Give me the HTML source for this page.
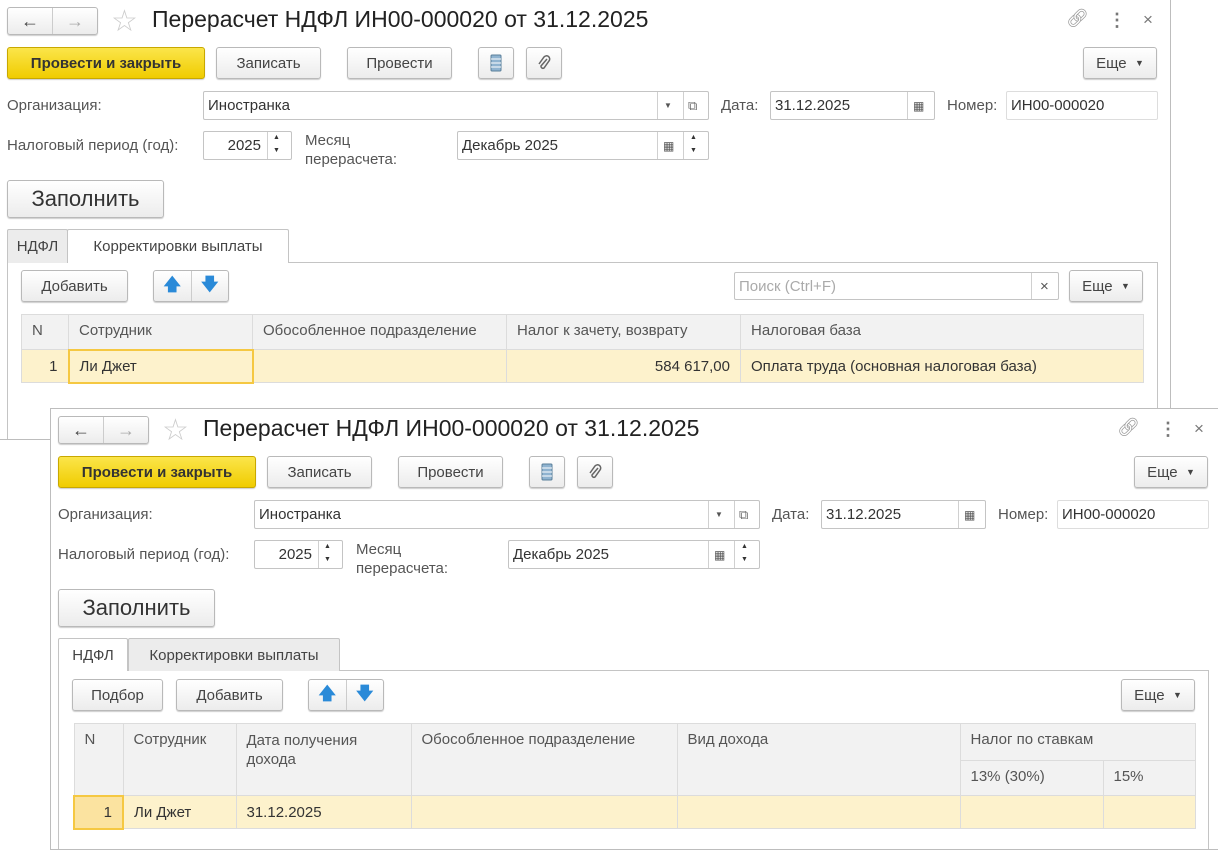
<!DOCTYPE html>
<html><head><meta charset="utf-8"><style>
*{box-sizing:border-box;margin:0;padding:0}
body{width:1218px;height:847px;background:#fff;position:relative;overflow:hidden;font-family:"Liberation Sans",Arial,sans-serif;font-size:15px;color:#444}
.win{position:absolute;background:#fff;border:1px solid #bdbdbd;overflow:hidden}
.a{position:absolute}
.btn{position:absolute;border:1px solid #b9b9b9;border-radius:3px;background:linear-gradient(#fff,#ececec);box-shadow:0 1px 1px rgba(0,0,0,.2);color:#444;font-size:15px;display:flex;align-items:center;justify-content:center;white-space:nowrap}
.yel{background:linear-gradient(#fbe54a,#f0cc00);border-color:#c8a800;color:#333;font-weight:bold}
.inp{position:absolute;border:1px solid #c4c4c4;background:#fff;border-radius:2px;font-size:15px;color:#333;padding-left:4px;display:flex;align-items:center}
.lbl{position:absolute;font-size:15px;color:#555;white-space:nowrap}
.sep{position:absolute;top:0;bottom:0;border-left:1px solid #d0d0d0}
.title{position:absolute;font-size:23px;color:#222;white-space:nowrap}
table{position:absolute;border-collapse:collapse;font-size:15px}
td{border:1px solid #dcdcdc;padding:0 10px;vertical-align:top;white-space:nowrap}
.hd td{background:#f2f2f2;color:#555;padding-top:7px}
.row td{background:#fdf2cc;color:#333;vertical-align:middle}
.tab{position:absolute;border:1px solid #c4c4c4;border-bottom:none;font-size:15px;color:#444;display:flex;align-items:center;justify-content:center;border-radius:2px 2px 0 0}
</style></head><body>

<div class="win" style="left:0;top:0;width:1171px;height:440px;border-left:none;border-top:none">
  <div class="btn" style="left:7px;top:7px;width:91px;height:28px"><span style="flex:1;text-align:center;font-size:18px;color:#444">&#x2190;</span><span style="border-left:1px solid #ccc;height:100%"></span><span style="flex:1;text-align:center;font-size:18px;color:#aaa">&#x2192;</span></div>
  <div class="a" style="left:111px;top:4px;font-size:30px;color:#ccc">&#9734;</div>
  <div class="title" style="left:152px;top:6px">Перерасчет НДФЛ ИН00-000020 от 31.12.2025</div>
  <div class="a" style="left:1066px;top:8px;font-size:18px;color:#999">&#x1F517;&#xFE0E;</div>
  <div class="a" style="left:1108px;top:10px;font-size:18px;color:#777;font-weight:bold">&#8942;</div>
  <div class="a" style="left:1143px;top:10px;font-size:17px;color:#777">&#215;</div>
  <div class="btn yel" style="left:7px;top:47px;width:198px;height:32px">Провести и закрыть</div>
  <div class="btn" style="left:216px;top:47px;width:105px;height:32px">Записать</div>
  <div class="btn" style="left:347px;top:47px;width:105px;height:32px">Провести</div>
  <div class="btn" style="left:478px;top:47px;width:36px;height:32px"><svg width="12" height="18"><rect x="1" y="1" width="10" height="16" rx="1" fill="#8fb3d0" stroke="#5a7f9a"/><path d="M1 5h10M1 9h10M1 13h10" stroke="#fff"/></svg></div>
  <div class="btn" style="left:526px;top:47px;width:36px;height:32px"><svg width="16" height="16"><path d="M11 4 L5 11 a2 2 0 0 0 3 2 L13 6 a3 3 0 0 0 -5 -4 L3 9" fill="none" stroke="#666" stroke-width="1.5"/></svg></div>
  <div class="btn" style="left:1083px;top:47px;width:74px;height:32px">Еще &nbsp;<span style="font-size:9px">&#9660;</span></div>
  <div class="lbl" style="left:7px;top:97px">Организация:</div>
  <div class="inp" style="left:203px;top:91px;width:506px;height:29px">Иностранка<span class="sep" style="left:453px"></span><span class="a" style="left:460px;font-size:8px;color:#555">&#9660;</span><span class="sep" style="left:479px"></span><span class="a" style="left:484px;font-size:13px;color:#666">&#x29C9;</span></div>
  <div class="lbl" style="left:721px;top:97px">Дата:</div>
  <div class="inp" style="left:770px;top:91px;width:165px;height:29px">31.12.2025<span class="sep" style="left:136px"></span><span class="a" style="left:142px;font-size:12px;color:#555">&#x25A6;</span></div>
  <div class="lbl" style="left:947px;top:97px">Номер:</div>
  <div class="inp" style="left:1006px;top:91px;width:152px;height:29px;border-color:#ddd">ИН00-000020</div>
  <div class="lbl" style="left:7px;top:137px">Налоговый период (год):</div>
  <div class="inp" style="left:203px;top:131px;width:89px;height:29px;justify-content:flex-end;padding-right:30px">2025<span class="sep" style="left:63px"></span><span class="a" style="left:69px;top:2px;font-size:7px">&#9650;</span><span class="a" style="left:69px;top:15px;font-size:7px">&#9660;</span></div>
  <div class="lbl" style="left:305px;top:131px;line-height:19px">Месяц<br>перерасчета:</div>
  <div class="inp" style="left:457px;top:131px;width:252px;height:29px">Декабрь 2025<span class="sep" style="left:199px"></span><span class="a" style="left:205px;font-size:12px;color:#555">&#x25A6;</span><span class="sep" style="left:225px"></span><span class="a" style="left:232px;top:2px;font-size:7px">&#9650;</span><span class="a" style="left:232px;top:15px;font-size:7px">&#9660;</span></div>
  <div class="btn" style="left:7px;top:180px;width:157px;height:38px;font-size:22px;color:#333">Заполнить</div>
  <div class="a" style="left:7px;top:262px;width:1151px;height:200px;border:1px solid #c4c4c4"></div>
  <div class="tab" style="left:7px;top:229px;width:61px;height:34px;background:#ececec">НДФЛ</div>
  <div class="tab" style="left:67px;top:229px;width:222px;height:34px;background:#fff;height:34px">Корректировки выплаты</div>
  <div class="btn" style="left:21px;top:270px;width:107px;height:32px">Добавить</div>
  <div class="btn" style="left:153px;top:270px;width:76px;height:32px"><span style="flex:1;text-align:center;color:#2a8ad8;font-size:17px;font-weight:bold">&#x1F845;&#xFE0E;</span><span style="border-left:1px solid #ccc;height:100%"></span><span style="flex:1;text-align:center;color:#2a8ad8;font-size:17px;font-weight:bold">&#x1F847;&#xFE0E;</span></div>
  <div class="inp" style="left:734px;top:272px;width:325px;height:28px;color:#aaa">Поиск (Ctrl+F)<span class="sep" style="left:296px"></span><span class="a" style="left:305px;color:#555">&#215;</span></div>
  <div class="btn" style="left:1069px;top:270px;width:74px;height:32px">Еще &nbsp;<span style="font-size:9px">&#9660;</span></div>
  <table style="left:21px;top:314px;width:1123px">
    <tr class="hd" style="height:35px"><td style="width:47px">N</td><td style="width:184px">Сотрудник</td><td style="width:254px">Обособленное подразделение</td><td style="width:234px">Налог к зачету, возврату</td><td>Налоговая база</td></tr>
    <tr class="row" style="height:33px"><td style="text-align:right">1</td><td style="border:2px solid #f5c842">Ли Джет</td><td></td><td style="text-align:right">584 617,00</td><td>Оплата труда (основная налоговая база)</td></tr>
  </table>
</div>

<div class="win" style="left:50px;top:408px;width:1170px;height:442px">
  <div class="btn" style="left:7px;top:7px;width:91px;height:28px"><span style="flex:1;text-align:center;font-size:18px;color:#444">&#x2190;</span><span style="border-left:1px solid #ccc;height:100%"></span><span style="flex:1;text-align:center;font-size:18px;color:#aaa">&#x2192;</span></div>
  <div class="a" style="left:111px;top:4px;font-size:30px;color:#ccc">&#9734;</div>
  <div class="title" style="left:152px;top:6px">Перерасчет НДФЛ ИН00-000020 от 31.12.2025</div>
  <div class="a" style="left:1066px;top:8px;font-size:18px;color:#999">&#x1F517;&#xFE0E;</div>
  <div class="a" style="left:1108px;top:10px;font-size:18px;color:#777;font-weight:bold">&#8942;</div>
  <div class="a" style="left:1143px;top:10px;font-size:17px;color:#777">&#215;</div>
  <div class="btn yel" style="left:7px;top:47px;width:198px;height:32px">Провести и закрыть</div>
  <div class="btn" style="left:216px;top:47px;width:105px;height:32px">Записать</div>
  <div class="btn" style="left:347px;top:47px;width:105px;height:32px">Провести</div>
  <div class="btn" style="left:478px;top:47px;width:36px;height:32px"><svg width="12" height="18"><rect x="1" y="1" width="10" height="16" rx="1" fill="#8fb3d0" stroke="#5a7f9a"/><path d="M1 5h10M1 9h10M1 13h10" stroke="#fff"/></svg></div>
  <div class="btn" style="left:526px;top:47px;width:36px;height:32px"><svg width="16" height="16"><path d="M11 4 L5 11 a2 2 0 0 0 3 2 L13 6 a3 3 0 0 0 -5 -4 L3 9" fill="none" stroke="#666" stroke-width="1.5"/></svg></div>
  <div class="btn" style="left:1083px;top:47px;width:74px;height:32px">Еще &nbsp;<span style="font-size:9px">&#9660;</span></div>
  <div class="lbl" style="left:7px;top:97px">Организация:</div>
  <div class="inp" style="left:203px;top:91px;width:506px;height:29px">Иностранка<span class="sep" style="left:453px"></span><span class="a" style="left:460px;font-size:8px;color:#555">&#9660;</span><span class="sep" style="left:479px"></span><span class="a" style="left:484px;font-size:13px;color:#666">&#x29C9;</span></div>
  <div class="lbl" style="left:721px;top:97px">Дата:</div>
  <div class="inp" style="left:770px;top:91px;width:165px;height:29px">31.12.2025<span class="sep" style="left:136px"></span><span class="a" style="left:142px;font-size:12px;color:#555">&#x25A6;</span></div>
  <div class="lbl" style="left:947px;top:97px">Номер:</div>
  <div class="inp" style="left:1006px;top:91px;width:152px;height:29px;border-color:#ddd">ИН00-000020</div>
  <div class="lbl" style="left:7px;top:137px">Налоговый период (год):</div>
  <div class="inp" style="left:203px;top:131px;width:89px;height:29px;justify-content:flex-end;padding-right:30px">2025<span class="sep" style="left:63px"></span><span class="a" style="left:69px;top:2px;font-size:7px">&#9650;</span><span class="a" style="left:69px;top:15px;font-size:7px">&#9660;</span></div>
  <div class="lbl" style="left:305px;top:131px;line-height:19px">Месяц<br>перерасчета:</div>
  <div class="inp" style="left:457px;top:131px;width:252px;height:29px">Декабрь 2025<span class="sep" style="left:199px"></span><span class="a" style="left:205px;font-size:12px;color:#555">&#x25A6;</span><span class="sep" style="left:225px"></span><span class="a" style="left:232px;top:2px;font-size:7px">&#9650;</span><span class="a" style="left:232px;top:15px;font-size:7px">&#9660;</span></div>
  <div class="btn" style="left:7px;top:180px;width:157px;height:38px;font-size:22px;color:#333">Заполнить</div>
  <div class="a" style="left:7px;top:261px;width:1151px;height:200px;border:1px solid #c4c4c4"></div>
  <div class="tab" style="left:7px;top:229px;width:70px;height:33px;background:#fff">НДФЛ</div>
  <div class="tab" style="left:77px;top:229px;width:212px;height:33px;background:#ececec">Корректировки выплаты</div>
  <div class="btn" style="left:21px;top:270px;width:91px;height:32px">Подбор</div>
  <div class="btn" style="left:125px;top:270px;width:107px;height:32px">Добавить</div>
  <div class="btn" style="left:257px;top:270px;width:76px;height:32px"><span style="flex:1;text-align:center;color:#2a8ad8;font-size:17px;font-weight:bold">&#x1F845;&#xFE0E;</span><span style="border-left:1px solid #ccc;height:100%"></span><span style="flex:1;text-align:center;color:#2a8ad8;font-size:17px;font-weight:bold">&#x1F847;&#xFE0E;</span></div>
  <div class="btn" style="left:1070px;top:270px;width:74px;height:32px">Еще &nbsp;<span style="font-size:9px">&#9660;</span></div>
  <table style="left:22px;top:314px;width:1123px">
    <tr class="hd" style="height:37px"><td rowspan="2" style="width:49px">N</td><td rowspan="2" style="width:113px">Сотрудник</td><td rowspan="2" style="width:175px;white-space:normal;line-height:19px">Дата получения дохода</td><td rowspan="2" style="width:266px">Обособленное подразделение</td><td rowspan="2" style="width:283px">Вид дохода</td><td colspan="2">Налог по ставкам</td></tr>
    <tr class="hd" style="height:35px"><td style="width:143px">13% (30%)</td><td>15%</td></tr>
    <tr class="row" style="height:33px"><td style="text-align:right;border:2px solid #f5c842;background:#fbe3a0">1</td><td>Ли Джет</td><td>31.12.2025</td><td></td><td></td><td></td><td></td></tr>
  </table>
</div>
</body></html>
